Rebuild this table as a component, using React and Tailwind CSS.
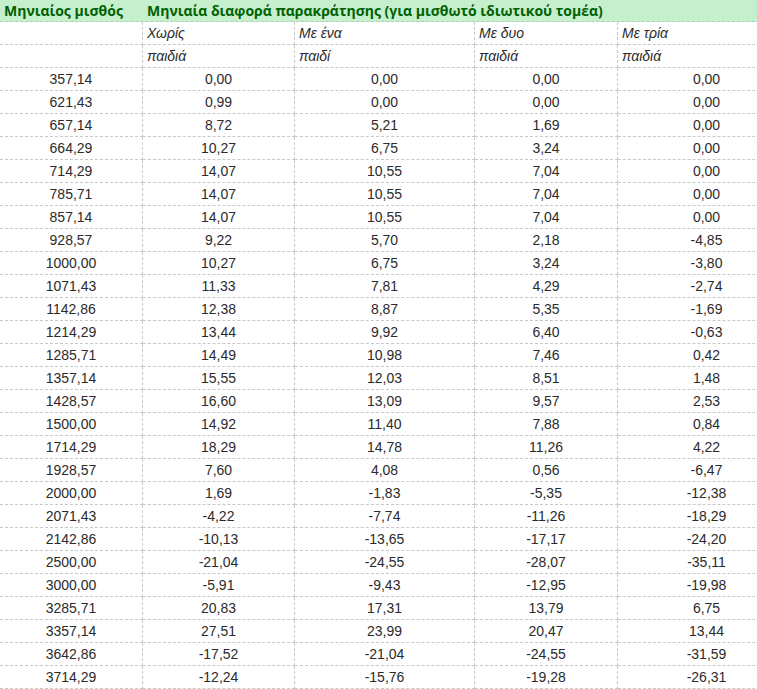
import React from "react";

const rows = [
  ["357,14", "0,00", "0,00", "0,00", "0,00"],
  ["621,43", "0,99", "0,00", "0,00", "0,00"],
  ["657,14", "8,72", "5,21", "1,69", "0,00"],
  ["664,29", "10,27", "6,75", "3,24", "0,00"],
  ["714,29", "14,07", "10,55", "7,04", "0,00"],
  ["785,71", "14,07", "10,55", "7,04", "0,00"],
  ["857,14", "14,07", "10,55", "7,04", "0,00"],
  ["928,57", "9,22", "5,70", "2,18", "-4,85"],
  ["1000,00", "10,27", "6,75", "3,24", "-3,80"],
  ["1071,43", "11,33", "7,81", "4,29", "-2,74"],
  ["1142,86", "12,38", "8,87", "5,35", "-1,69"],
  ["1214,29", "13,44", "9,92", "6,40", "-0,63"],
  ["1285,71", "14,49", "10,98", "7,46", "0,42"],
  ["1357,14", "15,55", "12,03", "8,51", "1,48"],
  ["1428,57", "16,60", "13,09", "9,57", "2,53"],
  ["1500,00", "14,92", "11,40", "7,88", "0,84"],
  ["1714,29", "18,29", "14,78", "11,26", "4,22"],
  ["1928,57", "7,60", "4,08", "0,56", "-6,47"],
  ["2000,00", "1,69", "-1,83", "-5,35", "-12,38"],
  ["2071,43", "-4,22", "-7,74", "-11,26", "-18,29"],
  ["2142,86", "-10,13", "-13,65", "-17,17", "-24,20"],
  ["2500,00", "-21,04", "-24,55", "-28,07", "-35,11"],
  ["3000,00", "-5,91", "-9,43", "-12,95", "-19,98"],
  ["3285,71", "20,83", "17,31", "13,79", "6,75"],
  ["3357,14", "27,51", "23,99", "20,47", "13,44"],
  ["3642,86", "-17,52", "-21,04", "-24,55", "-31,59"],
  ["3714,29", "-12,24", "-15,76", "-19,28", "-26,31"],
];

const subHeads = [
  ["Χωρίς", "Με ένα", "Με δυο", "Με τρία"],
  ["παιδιά", "παιδί", "παιδιά", "παιδιά"],
];

const gridCols = "grid grid-cols-[143px_152px_180px_143px_177px]";
const cell = "h-[23px] border-b border-dashed border-[#c8c8c8]";
const divider = "border-r";

const App = () => {
  return (
    <div className="w-[757px] h-[689px] overflow-hidden bg-white text-[#2b2b2b] font-['Liberation_Sans',Arial,sans-serif] text-[14px]">
      <div className="w-[795px]">
        {/* green title row */}
        <div
          className={`${gridCols} h-[22px] bg-[#c6efce] border-b border-dashed border-[#a9d4b1] text-[#006100] font-bold text-[14px] font-['Open_Sans',sans-serif] leading-[21px]`}
        >
          <div className="pl-[4px] whitespace-nowrap">Μηνιαίος μισθός</div>
          <div className="col-span-4 pl-[4px] whitespace-nowrap">
            Μηνιαία διαφορά παρακράτησης (για μισθωτό ιδιωτικού τομέα)
          </div>
        </div>

        {subHeads.map((line, i) => (
          <div key={i} className={`${gridCols} italic leading-[22px]`}>
            <div className={`${cell} ${divider}`}></div>
            {line.map((t, j) => (
              <div
                key={j}
                className={`${cell} ${j < 3 ? divider : ""} pl-[4px]`}
              >
                {t}
              </div>
            ))}
          </div>
        ))}

        {rows.map((r) => (
          <div key={r[0]} className={`${gridCols} leading-[22px]`}>
            {r.map((v, j) => (
              <div
                key={j}
                className={`${cell} ${j < 4 ? divider : ""} text-center`}
              >
                {v}
              </div>
            ))}
          </div>
        ))}
      </div>
    </div>
  );
};

export default App;
